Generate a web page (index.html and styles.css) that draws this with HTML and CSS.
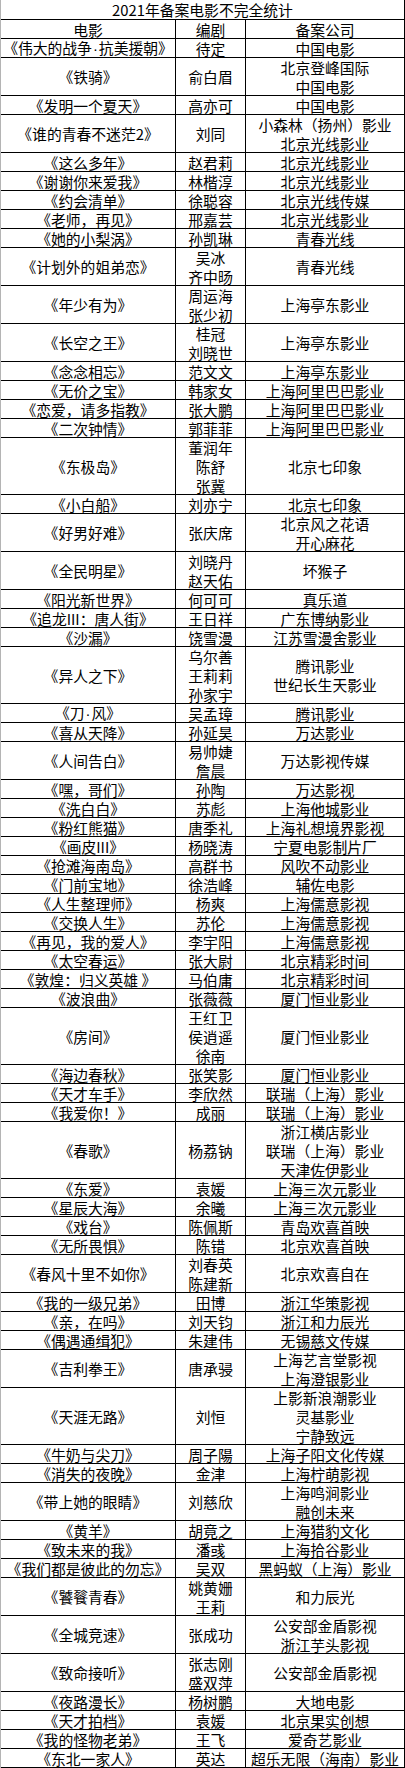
FILE: index.html
```html
<!DOCTYPE html>
<html lang="zh-CN">
<head>
<meta charset="utf-8">
<title>2021年备案电影不完全统计</title>
<link rel="stylesheet" href="styles.css">
</head>
<body>
<div class="sheet">
  <div class="title">2021年备案电影不完全统计</div>
  <div class="row r1"><div class="c">电影</div><div class="c">编剧</div><div class="c">备案公司</div></div>
  <div class="row r1"><div class="c"><p class="ln">《伟大的战争<i class="dot">·</i>抗美援朝》</p></div><div class="c">待定</div><div class="c">中国电影</div></div>
  <div class="row r2"><div class="c">《铁骑》</div><div class="c">俞白眉</div><div class="c"><span>北京登峰国际</span><span>中国电影</span></div></div>
  <div class="row r1"><div class="c">《发明一个夏天》</div><div class="c">高亦可</div><div class="c">中国电影</div></div>
  <div class="row r2"><div class="c">《谁的青春不迷茫2》</div><div class="c">刘同</div><div class="c"><span>小森林（扬州）影业</span><span>北京光线影业</span></div></div>
  <div class="row r1"><div class="c">《这么多年》</div><div class="c">赵君莉</div><div class="c">北京光线影业</div></div>
  <div class="row r1"><div class="c">《谢谢你来爱我》</div><div class="c">林楷淳</div><div class="c">北京光线影业</div></div>
  <div class="row r1"><div class="c">《约会清单》</div><div class="c">徐聪容</div><div class="c">北京光线传媒</div></div>
  <div class="row r1"><div class="c">《老师，再见》</div><div class="c">邢嘉芸</div><div class="c">北京光线影业</div></div>
  <div class="row r1"><div class="c">《她的小梨涡》</div><div class="c">孙凯琳</div><div class="c">青春光线</div></div>
  <div class="row r2"><div class="c">《计划外的姐弟恋》</div><div class="c"><span>吴冰</span><span>齐中旸</span></div><div class="c">青春光线</div></div>
  <div class="row r2"><div class="c">《年少有为》</div><div class="c"><span>周运海</span><span>张少初</span></div><div class="c">上海亭东影业</div></div>
  <div class="row r2"><div class="c">《长空之王》</div><div class="c"><span>桂冠</span><span>刘晓世</span></div><div class="c">上海亭东影业</div></div>
  <div class="row r1"><div class="c">《念念相忘》</div><div class="c">范文文</div><div class="c">上海亭东影业</div></div>
  <div class="row r1"><div class="c">《无价之宝》</div><div class="c">韩家女</div><div class="c">上海阿里巴巴影业</div></div>
  <div class="row r1"><div class="c">《恋爱，请多指教》</div><div class="c">张大鹏</div><div class="c">上海阿里巴巴影业</div></div>
  <div class="row r1"><div class="c">《二次钟情》</div><div class="c">郭菲菲</div><div class="c">上海阿里巴巴影业</div></div>
  <div class="row r3"><div class="c">《东极岛》</div><div class="c"><span>董润年</span><span>陈舒</span><span>张冀</span></div><div class="c">北京七印象</div></div>
  <div class="row r1"><div class="c">《小白船》</div><div class="c">刘亦宁</div><div class="c">北京七印象</div></div>
  <div class="row r2"><div class="c">《好男好难》</div><div class="c">张庆席</div><div class="c"><span>北京风之花语</span><span>开心麻花</span></div></div>
  <div class="row r2"><div class="c">《全民明星》</div><div class="c"><span>刘晓丹</span><span>赵天佑</span></div><div class="c">坏猴子</div></div>
  <div class="row r1"><div class="c">《阳光新世界》</div><div class="c">何可可</div><div class="c">真乐道</div></div>
  <div class="row r1"><div class="c">《追龙III：唐人街》</div><div class="c">王日祥</div><div class="c">广东博纳影业</div></div>
  <div class="row r1"><div class="c">《沙漏》</div><div class="c">饶雪漫</div><div class="c">江苏雪漫舍影业</div></div>
  <div class="row r3"><div class="c">《异人之下》</div><div class="c"><span>乌尔善</span><span>王莉莉</span><span>孙家宇</span></div><div class="c"><span>腾讯影业</span><span>世纪长生天影业</span></div></div>
  <div class="row r1"><div class="c"><p class="ln">《刀<i class="dot">·</i>风》</p></div><div class="c">吴孟璋</div><div class="c">腾讯影业</div></div>
  <div class="row r1"><div class="c">《喜从天降》</div><div class="c">孙延昊</div><div class="c">万达影业</div></div>
  <div class="row r2"><div class="c">《人间告白》</div><div class="c"><span>易帅婕</span><span>詹晨</span></div><div class="c">万达影视传媒</div></div>
  <div class="row r1"><div class="c">《嘿，哥们》</div><div class="c">孙陶</div><div class="c">万达影视</div></div>
  <div class="row r1"><div class="c">《洗白白》</div><div class="c">苏彪</div><div class="c">上海他城影业</div></div>
  <div class="row r1"><div class="c">《粉红熊猫》</div><div class="c">唐季礼</div><div class="c">上海礼想境界影视</div></div>
  <div class="row r1"><div class="c">《画皮III》</div><div class="c">杨晓涛</div><div class="c">宁夏电影制片厂</div></div>
  <div class="row r1"><div class="c">《抢滩海南岛》</div><div class="c">高群书</div><div class="c">风吹不动影业</div></div>
  <div class="row r1"><div class="c">《门前宝地》</div><div class="c">徐浩峰</div><div class="c">辅佐电影</div></div>
  <div class="row r1"><div class="c">《人生整理师》</div><div class="c">杨爽</div><div class="c">上海儒意影视</div></div>
  <div class="row r1"><div class="c">《交换人生》</div><div class="c">苏伦</div><div class="c">上海儒意影视</div></div>
  <div class="row r1"><div class="c">《再见，我的爱人》</div><div class="c">李宇阳</div><div class="c">上海儒意影视</div></div>
  <div class="row r1"><div class="c">《太空春运》</div><div class="c">张大尉</div><div class="c">北京精彩时间</div></div>
  <div class="row r1"><div class="c">《敦煌：归义英雄 》</div><div class="c">马伯庸</div><div class="c">北京精彩时间</div></div>
  <div class="row r1"><div class="c">《波浪曲》</div><div class="c">张薇薇</div><div class="c">厦门恒业影业</div></div>
  <div class="row r3"><div class="c">《房间》</div><div class="c"><span>王红卫</span><span>侯逍遥</span><span>徐南</span></div><div class="c">厦门恒业影业</div></div>
  <div class="row r1"><div class="c">《海边春秋》</div><div class="c">张笑影</div><div class="c">厦门恒业影业</div></div>
  <div class="row r1"><div class="c">《天才车手》</div><div class="c">李欣然</div><div class="c">联瑞（上海）影业</div></div>
  <div class="row r1"><div class="c">《我爱你！》</div><div class="c">成丽</div><div class="c">联瑞（上海）影业</div></div>
  <div class="row r3"><div class="c">《春歌》</div><div class="c">杨荔钠</div><div class="c"><span>浙江横店影业</span><span>联瑞（上海）影业</span><span>天津佐伊影业</span></div></div>
  <div class="row r1"><div class="c">《东爱》</div><div class="c">袁媛</div><div class="c">上海三次元影业</div></div>
  <div class="row r1"><div class="c">《星辰大海》</div><div class="c">余曦</div><div class="c">上海三次元影业</div></div>
  <div class="row r1"><div class="c">《戏台》</div><div class="c">陈佩斯</div><div class="c">青岛欢喜首映</div></div>
  <div class="row r1"><div class="c">《无所畏惧》</div><div class="c">陈错</div><div class="c">北京欢喜首映</div></div>
  <div class="row r2"><div class="c">《春风十里不如你》</div><div class="c"><span>刘春英</span><span>陈建新</span></div><div class="c">北京欢喜自在</div></div>
  <div class="row r1"><div class="c">《我的一级兄弟》</div><div class="c">田博</div><div class="c">浙江华策影视</div></div>
  <div class="row r1"><div class="c">《亲，在吗》</div><div class="c">刘天钧</div><div class="c">浙江和力辰光</div></div>
  <div class="row r1"><div class="c">《偶遇通缉犯》</div><div class="c">朱建伟</div><div class="c">无锡慈文传媒</div></div>
  <div class="row r2"><div class="c">《吉利拳王》</div><div class="c">唐承骎</div><div class="c"><span>上海艺言堂影视</span><span>上海澄银影业</span></div></div>
  <div class="row r3"><div class="c">《天涯无路》</div><div class="c">刘恒</div><div class="c"><span>上影新浪潮影业</span><span>灵基影业</span><span>宁静致远</span></div></div>
  <div class="row r1"><div class="c">《牛奶与尖刀》</div><div class="c">周子陽</div><div class="c">上海子阳文化传媒</div></div>
  <div class="row r1"><div class="c">《消失的夜晚》</div><div class="c">金津</div><div class="c">上海柠萌影视</div></div>
  <div class="row r2"><div class="c">《带上她的眼睛》</div><div class="c">刘慈欣</div><div class="c"><span>上海鸣涧影业</span><span>融创未来</span></div></div>
  <div class="row r1"><div class="c">《黄羊》</div><div class="c">胡竟之</div><div class="c">上海猎豹文化</div></div>
  <div class="row r1"><div class="c">《致未来的我》</div><div class="c">潘彧</div><div class="c">上海拾谷影业</div></div>
  <div class="row r1"><div class="c">《我们都是彼此的勿忘》</div><div class="c">吴双</div><div class="c">黑蚂蚁（上海）影业</div></div>
  <div class="row r2"><div class="c">《饕餮青春》</div><div class="c"><span>姚黄姗</span><span>王莉</span></div><div class="c">和力辰光</div></div>
  <div class="row r2"><div class="c">《全城竞速》</div><div class="c">张成功</div><div class="c"><span>公安部金盾影视</span><span>浙江芋头影视</span></div></div>
  <div class="row r2"><div class="c">《致命接听》</div><div class="c"><span>张志刚</span><span>盛双萍</span></div><div class="c">公安部金盾影视</div></div>
  <div class="row r1"><div class="c">《夜路漫长》</div><div class="c">杨树鹏</div><div class="c">大地电影</div></div>
  <div class="row r1"><div class="c">《天才拍档》</div><div class="c">袁媛</div><div class="c">北京果实创想</div></div>
  <div class="row r1"><div class="c">《我的怪物老弟》</div><div class="c">王飞</div><div class="c">爱奇艺影业</div></div>
  <div class="row r1"><div class="c">《东北一家人》</div><div class="c">英达</div><div class="c">超乐无限（海南）影业</div></div>
</div>
</body>
</html>
```

FILE: styles.css
```css
html, body {
  margin: 0;
  padding: 0;
  background: #ffffff;
}

.sheet {
  width: 405px;
  box-sizing: border-box;
  border-left: 1px solid #b4b4b4;
  font-family: "Noto Sans CJK SC", "Noto Sans", sans-serif;
  font-size: 14.8px;
  line-height: 19px;
  color: #000000;
}

.title {
  height: 20px;
  box-sizing: border-box;
  border-right: 1px solid #000;
  border-bottom: 1px solid #000;
  display: flex;
  align-items: center;
  justify-content: center;
  white-space: nowrap;
}

.row {
  display: grid;
  grid-template-columns: 175px 70px 159px;
}

.r1 { height: 19px; }
.r2 { height: 38px; }
.r3 { height: 57px; }

.c {
  box-sizing: border-box;
  border-right: 1px solid #000;
  border-bottom: 1px solid #000;
  display: flex;
  flex-direction: column;
  align-items: center;
  justify-content: center;
  text-align: center;
  white-space: nowrap;
  overflow: visible;
  min-height: 0;
}

.c span {
  display: block;
}

.ln {
  margin: 0;
}

.dot {
  font-style: normal;
  font-family: "Liberation Sans", sans-serif;
  padding: 0 1px;
}
```
